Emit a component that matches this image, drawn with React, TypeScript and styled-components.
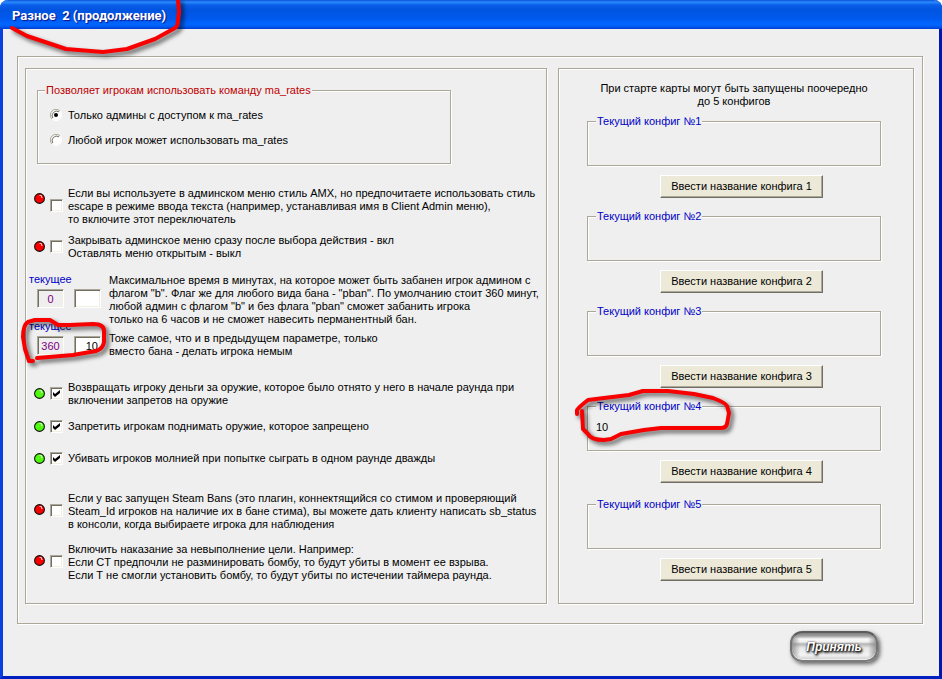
import React, { useState } from 'react';
import styled, { createGlobalStyle, css } from 'styled-components';

const GlobalStyle = createGlobalStyle`
  *, *::before, *::after { box-sizing: border-box; }
  body {
    margin: 0;
    background: #fff;
    font-family: "Liberation Sans", Arial, sans-serif;
    font-size: 11px;
    line-height: 13px;
    color: #000;
  }
  input, button { font: inherit; color: inherit; }
`;

const etched = css`
  border: 1px solid #aca899;
  box-shadow: 1px 1px 0 #fff, inset 1px 1px 0 #fff;
`;

const sunken = css`
  border: 1px solid;
  border-color: #aca899 #fff #fff #aca899;
  box-shadow: inset 1px 1px 0 #716f64, inset -1px -1px 0 #f1efe2;
`;

const Window = styled.div`
  display: flex;
  flex-direction: column;
  min-height: 100vh;
  background: #efefef;
  border: solid #0a3fe0;
  border-width: 0 3px 3px;
  border-right-color: #0018b0;
  border-bottom-color: #0020c0;
  border-radius: 8px 8px 0 0;
`;

const TitleBar = styled.header`
  position: relative;
  display: flex;
  align-items: center;
  height: 29px;
  margin: 0 -3px;
  padding: 3px 12px 0;
  border-radius: 8px 8px 0 0;
  background: linear-gradient(#0a4fd8 0, #2a8cff 2px, #0a5ee8 5px, #0054e0 10px, #0058ec 18px, #0066ff 24px, #0060f8 26px, #003dd0 29px);
`;

const Title = styled.h1`
  margin: 0;
  font: bold 13px/16px Roboto, sans-serif;
  color: #fff;
  text-shadow: 1px 1px 1px #0f1089;
  white-space: pre;
`;

const Frame = styled.main`
  ${etched}
  display: grid;
  grid-template-columns: 522fr 356fr;
  gap: 11px;
  margin: 27px 16px 0 14px;
  padding: 11px 8px 19px 7px;
`;

const Panel = styled.section`
  ${etched}
  min-width: 0;
`;

const OptionsPanel = styled(Panel)`
  padding: 15px 0 21px 3px;
`;

const ConfigPanel = styled(Panel)`
  padding: 13px 32px 21px 28px;
`;

const Group = styled.fieldset<{ $tone: string }>`
  ${etched}
  position: relative;
  min-width: 0;
  margin: 0;
  padding: 0 8px;
  legend {
    margin-left: 0;
    padding: 0 1px;
    background: #efefef;
    color: ${(p) => p.$tone};
    white-space: nowrap;
  }
`;

const RatesGroup = styled(Group)`
  width: 414px;
  height: 80px;
  margin: 0 0 23px 8px;
  padding: 0 7px;
`;

const RadioLabel = styled.label`
  display: flex;
  align-items: center;
  gap: 5px;
  height: 13px;
  margin: 12px 0 0 5px;
  white-space: nowrap;
`;

const ControlBox = styled.span`
  position: relative;
  display: block;
  flex: none;
  width: 13px;
  height: 13px;
  svg {
    position: absolute;
    inset: 0;
    pointer-events: none;
  }
`;

const RadioInput = styled.input`
  appearance: none;
  display: block;
  width: 12px;
  height: 12px;
  margin: 0;
`;

const CheckInput = styled.input`
  ${sunken}
  appearance: none;
  display: block;
  width: 13px;
  height: 13px;
  margin: 0;
  background: #fff;
`;

const OptionLabel = styled.label<{ $gap: number; $led: number; $box: number }>`
  display: grid;
  grid-template-columns: 11px 13px 1fr;
  column-gap: 5px;
  align-items: start;
  margin-bottom: ${(p) => p.$gap}px;
  padding-left: 5px;
  white-space: pre;
  > svg { margin-top: ${(p) => p.$led}px; }
  > ${ControlBox} { margin-top: ${(p) => p.$box}px; }
`;

const Limits = styled.div`
  display: grid;
  grid-template-columns: 80px 1fr;
  margin-bottom: 14px;
  white-space: pre;
`;

const LimitFields = styled.div`
  position: relative;
  height: 47px;
`;

const LimitCaption = styled.label`
  display: block;
  color: #0000c8;
`;

const LimitRow = styled.div`
  display: flex;
  gap: 10px;
  margin: 3px 0 0 8px;
`;

const LimitInput = styled.input<{ $current?: boolean }>`
  ${sunken}
  width: 27px;
  height: 19px;
  padding: 0 2px;
  background: ${(p) => (p.$current ? '#efefef' : '#fff')};
  color: ${(p) => (p.$current ? '#800080' : '#000')};
  text-align: ${(p) => (p.$current ? 'center' : 'right')};
  border-radius: 0;
`;

const LimitText = styled.p`
  margin: 1px 0 6px;
`;

const Intro = styled.p`
  margin: 0 0 7px;
  text-align: center;
  white-space: pre;
`;

const Config = styled.div<{ $gap: number }>`
  display: flex;
  flex-direction: column;
  align-items: center;
  margin-bottom: ${(p) => p.$gap}px;
`;

const ConfigGroup = styled(Group)`
  width: 100%;
  height: 51px;
`;

const ConfigValue = styled.output`
  display: block;
  margin-top: 8px;
`;

const PushButton = styled.button`
  width: 163px;
  height: 23px;
  margin: 9px 0 0 15px;
  padding: 0;
  background: #ece9d8;
  border: 1px solid;
  border-color: #fff #716f64 #716f64 #fff;
  box-shadow: inset -1px -1px 0 #aca899;
  white-space: nowrap;
`;

const Footer = styled.footer`
  display: flex;
  justify-content: flex-end;
  padding: 7px 61px 12px;
`;

const AcceptButton = styled.button`
  width: 88px;
  height: 31px;
  padding: 0;
  border: 2px solid;
  border-color: #5c5c5c #747474 #7c7c7c;
  border-radius: 12px;
  background:
    linear-gradient(90deg, #888c 0, #fff0 8px, #fff0 76px, #888c 100%),
    linear-gradient(#808080 0, #a0a0a0 3px, #fafafa 6px, #f0f0f0 9px, #b4b4b4 11px, #e8e8e8 15px, #f4f4f4 22px, #ccc 27px);
  box-shadow: inset 0 -1px 0 #eee, 2px 2px 4px #0009;
  font: italic bold 12px/16px "Liberation Sans", Arial, sans-serif;
  color: #fff;
  text-shadow: 1px 1px 2px #000, 0 0 2px #333, 1px 2px 3px #333;
`;

const Marker = styled.svg<{ $left: number; $top: number }>`
  position: absolute;
  left: ${(p) => p.$left}px;
  top: ${(p) => p.$top}px;
  z-index: 2;
  overflow: visible;
  pointer-events: none;
  fill: none;
  stroke: #f80000;
  stroke-width: 4;
  stroke-linecap: round;
  stroke-linejoin: round;
  filter: drop-shadow(3px 3px 2px #0009);
`;

function Led({ on }: { on: boolean }) {
  return (
    <svg width="11" height="11" viewBox="0 0 11 11" aria-hidden="true">
      <circle cx="5.5" cy="5.5" r="4.9" fill={on ? '#50fa10' : '#f80000'} stroke="#111" strokeWidth="1.1" />
      <path d="M5.5 2.5h2v2h1" fill="none" stroke={on ? '#d8ffc8' : '#ffc8c8'} strokeWidth="1" />
    </svg>
  );
}

function Radio({ label, checked, onChange }: { label: string; checked: boolean; onChange: () => void }) {
  return (
    <RadioLabel>
      <ControlBox>
        <RadioInput type="radio" name="rates" checked={checked} onChange={onChange} />
        <svg width="12" height="12" viewBox="0 0 12 12" aria-hidden="true">
          <circle cx="6" cy="6" r="5" fill="#fff" />
          <path d="M2 10a5.5 5.5 0 0 1 8-8" fill="none" stroke="#aca899" />
          <path d="M2.8 9a4.5 4.5 0 0 1 6.2-6.2" fill="none" stroke="#716f64" />
          <path d="M10 2a5.5 5.5 0 0 1-8 8" fill="none" stroke="#fff" />
          {checked && <circle cx="6" cy="6" r="2" fill="#000" />}
        </svg>
      </ControlBox>
      {label}
    </RadioLabel>
  );
}

interface OptionData {
  text: string;
  on: boolean;
  gap: number;
  led: number;
  box: number;
}

function Option({ text, on, gap, led, box }: OptionData) {
  const [checked, setChecked] = useState(on);
  return (
    <OptionLabel $gap={gap} $led={led} $box={box}>
      <Led on={on} />
      <ControlBox>
        <CheckInput type="checkbox" checked={checked} onChange={(e) => setChecked(e.target.checked)} />
        {checked && (
          <svg width="13" height="13" viewBox="0 0 13 13" aria-hidden="true">
            <path d="M3 5l2 2 5-4v3l-5 4-2-2z" fill="#000" />
          </svg>
        )}
      </ControlBox>
      <span>{text}</span>
    </OptionLabel>
  );
}

const menuOptions: OptionData[] = [
  {
    text: 'Если вы используете в админском меню стиль AMX, но предпочитаете использовать стиль\nescape в режиме ввода текста (например, устанавливая имя в Client Admin меню),\nто включите этот переключатель',
    on: false, gap: 8, led: 6, box: 12,
  },
  {
    text: 'Закрывать админское меню сразу после выбора действия - вкл\nОставлять меню открытым - выкл',
    on: false, gap: 13, led: 7, box: 6,
  },
];

const gameOptions: OptionData[] = [
  {
    text: 'Возвращать игроку деньги за оружие, которое было отнято у него в начале раунда при\nвключении запретов на оружие',
    on: true, gap: 13, led: 7, box: 6,
  },
  { text: 'Запретить игрокам поднимать оружие, которое запрещено', on: true, gap: 19, led: 1, box: 0 },
  { text: 'Убивать игроков молнией при попытке сыграть в одном раунде дважды', on: true, gap: 27, led: 1, box: 0 },
  {
    text: 'Если у вас запущен Steam Bans (это плагин, коннектящийся со стимом и проверяющий\nSteam_Id игроков на наличие их в бане стима), вы можете дать клиенту написать sb_status\nв консоли, когда выбираете игрока для наблюдения',
    on: false, gap: 12, led: 12, box: 12,
  },
  {
    text: 'Включить наказание за невыполнение цели. Например:\nЕсли CT предпочли не разминировать бомбу, то будут убиты в момент ее взрыва.\nЕсли Т не смогли установить бомбу, то будут убиты по истечении таймера раунда.',
    on: false, gap: 0, led: 12, box: 12,
  },
];

const configs = [
  { value: '', gap: 12 },
  { value: '', gap: 12 },
  { value: '', gap: 12 },
  { value: '10', gap: 15 },
  { value: '', gap: 0 },
];

export default function App() {
  const [rates, setRates] = useState(0);
  return (
    <>
      <GlobalStyle />
      <Window>
        <TitleBar>
          <Title>Разное  2 (продолжение)</Title>
          <Marker $left={0} $top={0} width="190" height="60" aria-hidden="true">
            <path d="M12 28L27 36 66 49 103 52 127 49 155 39 175 28Q178 26 178 20L179 12 178 0" />
          </Marker>
        </TitleBar>
        <Frame>
          <OptionsPanel>
            <RatesGroup $tone="#c00000">
              <legend>Позволяет игрокам использовать команду ma_rates</legend>
              <Radio label="Только админы с доступом к ma_rates" checked={rates === 0} onChange={() => setRates(0)} />
              <Radio label="Любой игрок может использовать ma_rates" checked={rates === 1} onChange={() => setRates(1)} />
            </RatesGroup>
            {menuOptions.map((o) => <Option key={o.text} {...o} />)}
            <Limits>
              <div>
                <LimitFields>
                  <LimitCaption htmlFor="ban">текущее</LimitCaption>
                  <LimitRow>
                    <LimitInput $current readOnly value="0" aria-label="Текущее время бана" />
                    <LimitInput id="ban" defaultValue="" />
                  </LimitRow>
                </LimitFields>
                <LimitFields>
                  <LimitCaption htmlFor="mute">текущее</LimitCaption>
                  <LimitRow>
                    <LimitInput $current readOnly value="360" aria-label="Текущее время немоты" />
                    <LimitInput id="mute" defaultValue="10" />
                  </LimitRow>
                  <Marker $left={-9} $top={-3} width="90" height="48" aria-hidden="true">
                    <path d="M13 44L9 44 5 32 3 20Q3 8 8 5L15 3 30 3 38 8 50 8 73 7Q84 7 84 14V25Q83 32 76 34L53 38 17 41" />
                  </Marker>
                </LimitFields>
              </div>
              <div>
                <LimitText>{'Максимальное время в минутах, на которое может быть забанен игрок админом с\nфлагом "b". Флаг же для любого вида бана - "pban". По умолчанию стоит 360 минут,\nлюбой админ с флагом "b" и без флага "pban" сможет забанить игрока\nтолько на 6 часов и не сможет навесить перманентный бан.'}</LimitText>
                <LimitText>{'Тоже самое, что и в предыдущем параметре, только\nвместо бана - делать игрока немым'}</LimitText>
              </div>
            </Limits>
            {gameOptions.map((o) => <Option key={o.text} {...o} />)}
          </OptionsPanel>
          <ConfigPanel>
            <Intro>{'При старте карты могут быть запущены поочередно\nдо 5 конфигов'}</Intro>
            {configs.map((c, i) => (
              <Config key={i} $gap={c.gap}>
                <ConfigGroup $tone="#0000c8">
                  <legend>Текущий конфиг №{i + 1}</legend>
                  <ConfigValue>{c.value}</ConfigValue>
                  {c.value && (
                    <Marker $left={-13} $top={-24} width="160" height="55" aria-hidden="true">
                      <path d="M2 25V21Q4 18 13 11L29 9 54 6 68 2H93L119 5 138 9Q151 14 152 17L154 24 152 35Q151 39 146 39H86L69 41 46 45 36 50 29 51Q16 51 13 45L8 40 7 22" />
                    </Marker>
                  )}
                </ConfigGroup>
                <PushButton type="button">Ввести название конфига {i + 1}</PushButton>
              </Config>
            ))}
          </ConfigPanel>
        </Frame>
        <Footer>
          <AcceptButton type="button">Принять</AcceptButton>
        </Footer>
      </Window>
    </>
  );
}
